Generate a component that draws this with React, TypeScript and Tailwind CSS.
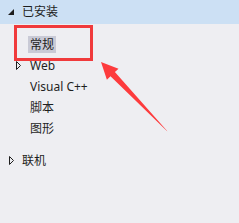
import React from "react";

const font = { fontFamily: '"Noto Sans", "Noto Sans CJK SC", sans-serif' };

const Filled = () => (
  <svg width="6" height="6" viewBox="0 0 6 6" className="shrink-0">
    <polygon points="6,0 6,6 0,6" fill="#1e1e1e" />
  </svg>
);

const Hollow = () => (
  <svg width="5" height="9" viewBox="0 0 5 9" className="shrink-0">
    <polygon points="0.5,0.5 4.5,4.5 0.5,8.5" fill="none" stroke="#1e1e1e" strokeWidth="1" />
  </svg>
);

const Item = (props: { label: string; arrow?: boolean; selected?: boolean }) => (
  <div className="flex h-[21px] items-center">
    <div className="flex w-[28px] justify-end pr-[7px]">{props.arrow && <Hollow />}</div>
    <span
      className={
        "px-[2px] leading-[17px] " + (props.selected ? "bg-[#c9cad6]" : "")
      }
    >
      {props.label}
    </span>
  </div>
);

export default function App() {
  return (
    <div
      className="relative h-[223px] w-[239px] overflow-hidden bg-[#eeeef2] text-[12px] text-[#1e1e1e]"
      style={font}
    >
      <div className="flex h-[24px] items-center bg-[#cce0f4] pl-[8px]">
        <Filled />
        <span className="ml-[8px] leading-[16px]">已安装</span>
      </div>

      <div className="pt-[10px]">
        <Item label="常规" selected />
        <Item label="Web" arrow />
        <Item label="Visual C++" />
        <Item label="脚本" />
        <Item label="图形" />
      </div>

      <div className="mt-[11px] flex h-[21px] items-center pl-[9px]">
        <Hollow />
        <span className="ml-[8px]">联机</span>
      </div>

      <div className="absolute left-[14px] top-[25px] h-[36px] w-[79px] border-[3px] border-[#f03a3c]" />

      <svg className="absolute left-0 top-0" width="239" height="223" viewBox="0 0 239 223">
        <polygon
          points="101,62 118.5,68.7 114.9,72.1 167.4,131.3 166.6,130.7 110.5,76.3 106.9,79.7"
          fill="#fd3b3d"
        />
      </svg>
    </div>
  );
}
